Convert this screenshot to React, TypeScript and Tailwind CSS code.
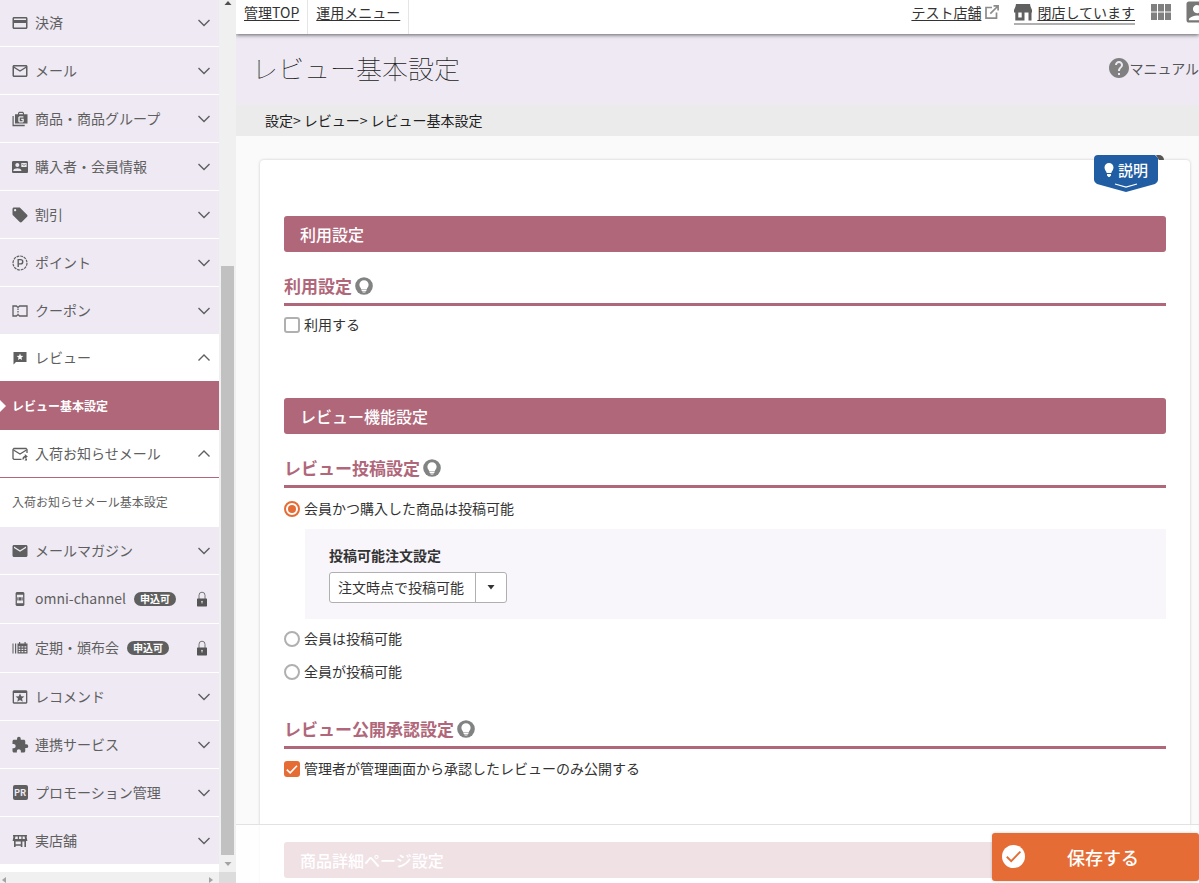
import { useState } from "react";
import type { ReactNode } from "react";
import {
  MdAccountBox,
  MdContactMail,
  MdCreditCard,
  MdExtension,
  MdHelp,
  MdLocalOffer,
  MdMail,
  MdMailOutline,
} from "react-icons/md";

const STAR =
  "M12 5.6l1.9 4.3 4.7.4-3.6 3.1 1.1 4.6-4.1-2.4L7.9 18 9 13.4 5.4 10.3l4.7-.4z";

function GroupIcon() {
  return (
    <svg width="16" height="16" viewBox="0 0 16 16" fill="currentColor" aria-hidden="true">
      <path d="M0.5 5h1.2v8.8h11v1.4H0.5z" />
      <path
        fillRule="evenodd"
        d="M3 3.2h3V2l1-1.2h4L12 2v1.2h3.5v9.3H3zM7.2 3.2h3.6V2H7.2zM7.3 5.2l-1 1v4.2l1 1h3.6l.9-1V7.8H9.2v1.1h1.3v1.3H7.7V6.4h3.7V5.2z"
      />
    </svg>
  );
}

function PointIcon() {
  return (
    <svg width="16" height="16" viewBox="0 0 16 16" fill="none" stroke="currentColor" aria-hidden="true">
      <circle cx="8" cy="8" r="7" strokeWidth="1.2" strokeDasharray="2.8 0.86" />
      <path d="M6.2 12V4.6h2.4a2.1 2.1 0 0 1 0 4.3H6.2" strokeWidth="1.4" />
    </svg>
  );
}

function CouponIcon() {
  return (
    <svg width="16" height="16" viewBox="0 0 16 16" fill="none" stroke="currentColor" strokeWidth="1.3" aria-hidden="true">
      <path d="M1 3h3.4L6 4.4 7.6 3H15v10H7.6L6 11.6 4.4 13H1z" />
      <path d="M6 5.4v5.4" strokeDasharray="1.6 1" />
    </svg>
  );
}

function ReviewIcon() {
  return (
    <svg width="16" height="16" viewBox="0 0 16 16" fill="currentColor" aria-hidden="true">
      <path
        fillRule="evenodd"
        d="M1.5 2h13v10H4l-2.5 2.5zM8 3.6l-.9 2.2-2.4.2 1.8 1.6L6 10l2-1.3L10 10l-.5-2.4L11.3 6l-2.4-.2z"
      />
    </svg>
  );
}

function ArrivalMailIcon() {
  return (
    <svg width="16" height="16" viewBox="0 0 16 16" fill="none" stroke="currentColor" strokeWidth="1.3" aria-hidden="true">
      <path d="M9.500 13.400H2l-1-1V3.500l1-1h12l1 1v3.500" />
      <path d="M1.500 4L8 8l6.500-4" />
      <path d="M11 13.500c0-2 1-3 3-3" />
      <path d="M12.800 8l3 2.500-3 2.500zM14 12.500h1v2h-2.500z" fill="currentColor" stroke="none" />
    </svg>
  );
}

function OmniIcon() {
  return (
    <svg width="16" height="16" viewBox="0 0 16 16" fill="currentColor" aria-hidden="true">
      <path
        fillRule="evenodd"
        d="M4.6 1h6.8l1 1v12l-1 1H4.600l-1-1V2zM4.900 3.800v8.400h6.200V3.800z"
      />
      <path d="M5.300 6.200h1.300v3.400H5.300zM7 6.200h2v3.400H7zM9.400 6.200h1.300v3.400H9.400z" />
    </svg>
  );
}

function SubscriptionIcon() {
  return (
    <svg width="16" height="16" viewBox="0 0 16 16" fill="currentColor" aria-hidden="true">
      <path d="M0.500 3.500h1v10h-1zM3 3.500h1.200v10H3z" />
      <path
        fillRule="evenodd"
        d="M5.500 3.500H7V2h1.200v1.500h4.300V2h1.200v1.500h1.800v10h-10zM6.700 6.300v1.300h1.600V6.300zM9.500 6.300v1.300h1.800V6.300zM12.500 6.300v1.300h1.800V6.300zM6.700 8.700V10h1.600V8.700zM9.500 8.700V10h1.800V8.700zM12.500 8.700V10h1.800V8.700zM6.700 11.100v1.200h1.600v-1.200zM9.500 11.100v1.200h1.800v-1.200zM12.500 11.100v1.200h1.800v-1.200z"
      />
    </svg>
  );
}

function RecommendIcon() {
  return (
    <svg width="16" height="16" viewBox="0 0 24 24" fill="currentColor" aria-hidden="true">
      <path
        fillRule="evenodd"
        d="M2.500 2h19l1.500 1.500v17L21.500 22h-19L1 20.500v-17zM3 6v14h18V6z"
      />
      <path d={STAR} transform="translate(0 1)" />
    </svg>
  );
}

function ShopIcon() {
  return (
    <svg width="16" height="16" viewBox="0 0 16 16" fill="currentColor" aria-hidden="true">
      <path
        fillRule="evenodd"
        d="M1 2h14v1.500h-.5l.9 4.500H14v6h-1.600V8.500h-2V14H8.800v-1.300H3.600V14H2V8H.6l.9-4.500H1zM3.400 3.500L3 6h2.800V3.500zM7 3.500V6h2.400V3.500zM10.600 3.500V6H13l-.4-2.500zM3.600 8.500v2.800h5.200V8.500z"
      />
    </svg>
  );
}

function PrIcon() {
  return (
    <span
      aria-hidden="true"
      className="flex h-[15px] w-[15px] items-center justify-center rounded-xs bg-[#5f5f5f] text-[9px] leading-none font-bold text-[#eee9f3]"
    >
      PR
    </span>
  );
}

function LockIcon() {
  return (
    <svg width="12" height="16" viewBox="0 0 12 16" aria-hidden="true" className="shrink-0">
      <path d="M3 8V4.200a3 3 0 0 1 6 0V8" fill="none" stroke="#777" strokeWidth="1" />
      <path
        fill="#555"
        fillRule="evenodd"
        d="M1.500 7.500h9l.5.500v7l-.5.500h-9L1 15V8zM6 9.800a.8.800 0 0 0-.4 1.500v1.200h.8v-1.200A.8.800 0 0 0 6 9.800z"
      />
    </svg>
  );
}

function Chevron({ up = false }: { up?: boolean }) {
  return (
    <svg width="14" height="10" viewBox="0 0 14 10" fill="none" stroke="#5f5f5f" strokeWidth="1.400" aria-hidden="true" className="shrink-0">
      {up ? <path d="M1.500 7.500L7 2l5.500 5.500" /> : <path d="M1.500 2L7 7.500 12.500 2" />}
    </svg>
  );
}

function BulbShape({ className }: { className: string }) {
  return (
    <g className={className}>
      <path d="M9 3.200a4.600 4.600 0 0 0-4.600 4.600c0 2.100 1.500 3.100 1.900 4.700h5.400c.4-1.600 1.900-2.600 1.900-4.700A4.600 4.600 0 0 0 9 3.200z" />
      <path d="M6.600 13.100h4.800v1H6.600zM7 14.500h4l-.8 1.100H7.800z" />
    </g>
  );
}

type Item = { label: string; icon: ReactNode };

const upperItems: Item[] = [
  { label: "決済", icon: <MdCreditCard size={18} /> },
  { label: "メール", icon: <MdMailOutline size={18} /> },
  { label: "商品・商品グループ", icon: <GroupIcon /> },
  { label: "購入者・会員情報", icon: <MdContactMail size={16} /> },
  { label: "割引", icon: <MdLocalOffer size={18} /> },
  { label: "ポイント", icon: <PointIcon /> },
  { label: "クーポン", icon: <CouponIcon /> },
];

const lowerItems: Item[] = [
  { label: "レコメンド", icon: <RecommendIcon /> },
  { label: "連携サービス", icon: <MdExtension size={18} /> },
  { label: "プロモーション管理", icon: <PrIcon /> },
  { label: "実店舗", icon: <ShopIcon /> },
];

function MenuRow({
  item,
  tone = "closed",
  locked = false,
}: {
  item: Item;
  tone?: "closed" | "open" | "openLined";
  locked?: boolean;
}) {
  const look =
    tone === "closed"
      ? "border-b border-white bg-[#eee9f3]"
      : tone === "open"
        ? "bg-white"
        : "border-b border-[#b0677a] bg-white";
  const height = locked ? "h-[49px]" : tone === "open" ? "h-[46px]" : "h-12";
  return (
    <li>
      <button
        type="button"
        aria-expanded={tone !== "closed"}
        className={`flex w-full items-center pr-2 pl-[11px] text-left text-sm text-[#5f5f5f] ${look} ${height}`}
      >
        <span className="mr-1.5 flex w-[18px] shrink-0 justify-center">{item.icon}</span>
        <span className="pb-0.5 whitespace-nowrap">{item.label}</span>
        {locked && (
          <span className="ml-2 flex h-3.5 items-center rounded-full bg-[#5f5f5f] px-1.5 text-[10px] leading-none font-bold whitespace-nowrap text-white">
            申込可
          </span>
        )}
        <span className="ml-auto flex pl-1">
          {locked ? <span className="mr-[3px] flex"><LockIcon /></span> : <Chevron up={tone !== "closed"} />}
        </span>
      </button>
    </li>
  );
}

function Sidebar() {
  return (
    <div className="flex w-[236px] shrink-0 flex-col">
      <div className="flex min-h-0 flex-1">
        <nav aria-label="メニュー" className="min-w-0 flex-1 overflow-hidden bg-white">
          <ul className="-mt-px">
            {upperItems.map((i) => (
              <MenuRow key={i.label} item={i} />
            ))}
            <MenuRow item={{ label: "レビュー", icon: <ReviewIcon /> }} tone="open" />
            <li>
              <a
                href="#review-basic"
                aria-current="page"
                className="flex h-[49px] items-center bg-[#b0677a] text-xs font-bold text-white"
              >
                <svg width="6" height="12" viewBox="0 0 6 12" fill="#fff" aria-hidden="true" className="mr-1.5">
                  <path d="M0 0l6 6-6 6z" />
                </svg>
                レビュー基本設定
              </a>
            </li>
            <MenuRow
              item={{ label: "入荷お知らせメール", icon: <ArrivalMailIcon /> }}
              tone="openLined"
            />
            <li>
              <a href="#arrival-basic" className="flex h-[49px] items-center bg-white px-3 pb-0.5 text-xs text-[#5f5f5f]">
                入荷お知らせメール基本設定
              </a>
            </li>
            <MenuRow item={{ label: "メールマガジン", icon: <MdMail size={18} /> }} />
            <MenuRow item={{ label: "omni-channel", icon: <OmniIcon /> }} locked />
            <MenuRow item={{ label: "定期・頒布会", icon: <SubscriptionIcon /> }} locked />
            {lowerItems.map((i) => (
              <MenuRow key={i.label} item={i} />
            ))}
          </ul>
        </nav>
        <div className="flex w-[17px] shrink-0 flex-col items-center bg-[#f0f0f0] pr-1">
          <svg width="8" height="6" viewBox="0 0 8 6" fill="#505050" aria-hidden="true" className="ml-1">
            <path d="M0.500 5L4 1l3.500 4z" />
          </svg>
          <div className="flex w-full flex-1 flex-col justify-end pl-0.5">
            <div className="h-[589px] w-[13px] bg-[#c1c1c1]" />
          </div>
          <div className="flex h-[17px] items-center">
            <svg width="8" height="6" viewBox="0 0 8 6" fill="#a3a3a3" aria-hidden="true" className="ml-1">
              <path d="M0.500 1h7L4 5z" />
            </svg>
          </div>
        </div>
      </div>
      <div className="flex h-[11px] shrink-0">
        <div className="flex flex-1 items-end justify-between bg-[#f0f0f0] px-0.5">
          <svg width="5" height="6" viewBox="0 0 5 6" fill="#a3a3a3" aria-hidden="true">
            <path d="M4 0v6L0 3z" />
          </svg>
          <svg width="9" height="6" viewBox="0 0 9 6" fill="#a3a3a3" aria-hidden="true">
            <path d="M1 0v6l4-3z" />
          </svg>
        </div>
        <div className="w-[17px] bg-[#dcdcdc]" />
      </div>
    </div>
  );
}

function TopBar() {
  return (
    <header className="relative z-10 flex h-[34px] shrink-0 bg-white text-sm leading-6 whitespace-nowrap text-[#333] shadow-[0_1px_4px_rgba(0,0,0,0.6)]">
      <a href="#top" className="border-r border-[#e5e5e5] px-2 underline underline-offset-2">
        管理TOP
      </a>
      <a href="#operations" className="border-r border-[#e5e5e5] px-2 underline underline-offset-2">
        運用メニュー
      </a>
      <div className="-mr-[12px] ml-auto flex items-start">
        <a href="#shop" className="mr-[15px] flex items-center">
          <span className="underline underline-offset-2">テスト店舗</span>
          <svg width="14" height="14" viewBox="0 0 14 14" fill="none" stroke="#8c8c8c" strokeWidth="1.700" aria-hidden="true" className="ml-1">
            <path d="M7 2.500H1v10.600h10.500V7.500" />
            <path d="M8.500.9h4.600v4.600M13 1L5.300 8.700" />
          </svg>
        </a>
        <a href="#shop-status" className="mr-4 flex h-[25px] items-start border-b-2 border-[#b0b0b0]">
          <svg width="18" height="18" viewBox="0 0 18 18" fill="#606060" aria-hidden="true" className="mt-[3px] mr-[5px]">
            <path
              fillRule="evenodd"
              d="M2 1h14l.5 2.500L18 7v2.500h-.5v8h-3v-8h-4v8H1.300v-8H0V7l1.500-3.500zM4.300 9.500v5h3.400v-5z"
            />
          </svg>
          <span className="underline underline-offset-2">閉店しています</span>
        </a>
        <button type="button" aria-label="アプリ一覧" className="mt-1 mr-3 text-[#808080]">
          <svg width="20" height="16" viewBox="0 0 20 16" fill="currentColor" aria-hidden="true">
            <path d="M0 0h6v7.500H0zM7 0h6v7.500H7zM14 0h6v7.500h-6zM0 8.500h6V16H0zM7 8.500h6V16H7zM14 8.500h6V16h-6z" />
          </svg>
        </button>
        <button type="button" aria-label="アカウント" className="-mt-0.5 text-[#777]">
          <MdAccountBox size={28} />
        </button>
      </div>
    </header>
  );
}

function SectionTitle({ children }: { children: ReactNode }) {
  return (
    <h2 className="flex h-9 items-center rounded-[3px] bg-[#b0677a] px-4 pb-px text-base font-medium text-white">
      {children}
    </h2>
  );
}

function SubTitle({ children }: { children: ReactNode }) {
  return (
    <div className="flex h-[34px] items-center gap-[3px] border-b-[3px] border-[#b0677a] pb-1">
      <h3 className="text-[17px] leading-6 font-bold text-[#b0677a]">{children}</h3>
      <button type="button" aria-label="ヘルプ">
        <svg width="18" height="18" viewBox="0 0 18 18" aria-hidden="true">
          <circle cx="9" cy="9" r="8.800" fill="#808381" />
          <BulbShape className="fill-white" />
        </svg>
      </button>
    </div>
  );
}

function CheckField({ label, initial }: { label: string; initial: boolean }) {
  const [on, setOn] = useState(initial);
  return (
    <label className="flex h-5 items-center gap-1 text-sm text-[#333]">
      <span className="grid">
        <input
          type="checkbox"
          checked={on}
          onChange={(e) => setOn(e.target.checked)}
          className="col-start-1 row-start-1 h-4 w-4 appearance-none rounded-[3px] border-2 border-[#b0b0b0] bg-white checked:border-[#e66c35] checked:bg-[#e66c35]"
        />
        {on && (
          <svg viewBox="0 0 16 16" fill="none" stroke="#fff" strokeWidth="1.600" aria-hidden="true" className="pointer-events-none col-start-1 row-start-1 h-4 w-4">
            <path d="M2.800 8.600l3.400 3.200 6.800-7" />
          </svg>
        )}
      </span>
      <span className="pb-0.5">{label}</span>
    </label>
  );
}

function RadioField({ label, checked, onPick }: { label: string; checked: boolean; onPick: () => void }) {
  return (
    <label className="flex h-5 items-center gap-1 text-sm text-[#333]">
      <input
        type="radio"
        name="posting"
        checked={checked}
        onChange={onPick}
        className="h-4 w-4 appearance-none rounded-full border-2 border-[#b0b0b0] bg-white bg-clip-content p-0.5 checked:border-[#e66c35] checked:bg-[#e66c35]"
      />
      <span className="pb-0.5">{label}</span>
    </label>
  );
}

function HintBadge() {
  return (
    <button type="button" className="absolute -top-1.5 right-[26px] flex h-[38px] w-[70px] text-white">
      <svg viewBox="0 0 70 38" aria-hidden="true" className="absolute inset-0 h-full w-full">
        <path d="M62 1h3a5 5 0 0 1 5 5h-5z" fill="#555" />
        <path d="M4 1h57l3 3v22a5 5 0 0 1-3 4L32 38 3 30a5 5 0 0 1-3-4V5a4 4 0 0 1 4-4z" fill="#205da3" />
        <path d="M21 30l11 3.200L43 30" fill="none" stroke="#fff" strokeWidth="1.200" />
        <path d="M15 9a4.500 4.500 0 0 0-4.500 4.500c0 2.500 1.700 3.400 2.200 5.500h4.600c.5-2.100 2.200-3 2.200-5.500A4.500 4.500 0 0 0 15 9zM13 20h4v1.500l-1.500 1.500h-1L13 21.500z" fill="#fff" />
      </svg>
      <span className="relative pt-1 pl-6 text-[15px] leading-6 font-medium">説明</span>
    </button>
  );
}

function Settings() {
  const [posting, setPosting] = useState(0);
  return (
    <div className="relative rounded-sm bg-white px-6 pt-14 pb-20 shadow-[0_0_3px_rgba(0,0,0,0.2)]">
      <HintBadge />
      <section>
        <SectionTitle>利用設定</SectionTitle>
        <div className="mt-5">
          <SubTitle>利用設定</SubTitle>
          <div className="mt-[9px]">
            <CheckField label="利用する" initial={false} />
          </div>
        </div>
      </section>

      <section className="mt-[63px]">
        <SectionTitle>レビュー機能設定</SectionTitle>
        <div className="mt-5">
          <SubTitle>レビュー投稿設定</SubTitle>
          <div className="mt-[11px]">
            <RadioField label="会員かつ購入した商品は投稿可能" checked={posting === 0} onPick={() => setPosting(0)} />
          </div>
          <div className="mt-2.5 ml-[21px] bg-[#f8f6fa] px-6 py-4">
            <label htmlFor="order-timing" className="block text-sm font-bold text-[#333]">
              投稿可能注文設定
            </label>
            <div className="mt-[7px] grid h-[31px] w-[178px] grid-cols-[1fr_31px] overflow-hidden rounded-[3px] border border-[#b0b0b0] bg-white">
              <select
                id="order-timing"
                className="col-span-2 col-start-1 row-start-1 appearance-none bg-transparent pb-0.5 pl-2 text-sm text-[#333]"
              >
                <option>注文時点で投稿可能</option>
              </select>
              <span className="pointer-events-none col-start-2 row-start-1 flex items-center justify-center border-l border-[#b0b0b0]">
                <svg width="8" height="5" viewBox="0 0 8 5" fill="#333" aria-hidden="true">
                  <path d="M0.500 0h7L4 4.500z" />
                </svg>
              </span>
            </div>
          </div>
          <div className="mt-2.5 flex flex-col gap-[13px]">
            <RadioField label="会員は投稿可能" checked={posting === 1} onPick={() => setPosting(1)} />
            <RadioField label="全員が投稿可能" checked={posting === 2} onPick={() => setPosting(2)} />
          </div>
        </div>
        <div className="mt-[33px]">
          <SubTitle>レビュー公開承認設定</SubTitle>
          <div className="mt-2.5">
            <CheckField label="管理者が管理画面から承認したレビューのみ公開する" initial />
          </div>
        </div>
      </section>

      <section className="mt-[63px]">
        <SectionTitle>商品詳細ページ設定</SectionTitle>
      </section>
    </div>
  );
}

export default function App() {
  return (
    <div className="flex h-screen overflow-hidden bg-[#fafafa] font-['Noto_Sans_CJK_JP',sans-serif]">
      <Sidebar />
      <div className="relative flex min-w-0 flex-1 flex-col overflow-hidden">
        <TopBar />
        <div className="flex h-[71px] shrink-0 items-center justify-between bg-[#eee9f3] pb-1 pl-4">
          <h1 className="text-[26px] leading-9 font-thin text-[#222]">レビュー基本設定</h1>
          <a href="#manual" className="flex items-center text-sm text-[#555]">
            <MdHelp size={24} className="-mr-0.5 text-[#808080]" />
            マニュアル
          </a>
        </div>
        <nav
          aria-label="パンくず"
          className="flex h-[31px] shrink-0 items-center gap-[3px] bg-[#ebebeb] pb-0.5 pl-[29px] text-sm text-[#222]"
        >
          <span>設定&gt;</span>
          <span>レビュー&gt;</span>
          <span>レビュー基本設定</span>
        </nav>
        <main className="min-h-0 flex-1 overflow-hidden pt-6 pr-[9px] pl-6">
          <Settings />
        </main>
        <div className="absolute inset-x-0 bottom-0 flex h-[59px] justify-end border-t border-[#e2e2e2] bg-white/80 pt-2">
          <button
            type="button"
            className="flex h-12 w-[207px] items-center rounded-[3px] bg-[#e66c35] pb-px pl-2.5 text-lg font-medium text-white shadow-[0_0_3px_rgba(0,0,0,0.2)]"
          >
            <svg width="23" height="23" viewBox="0 0 23 23" aria-hidden="true">
              <circle cx="11.500" cy="11.500" r="11.500" fill="#fff" />
              <path d="M4.800 11.800l4.400 4.300 9.200-9.400" fill="none" stroke="#e66c35" strokeWidth="1.900" />
            </svg>
            <span className="ml-[42px]">保存する</span>
          </button>
        </div>
      </div>
    </div>
  );
}
